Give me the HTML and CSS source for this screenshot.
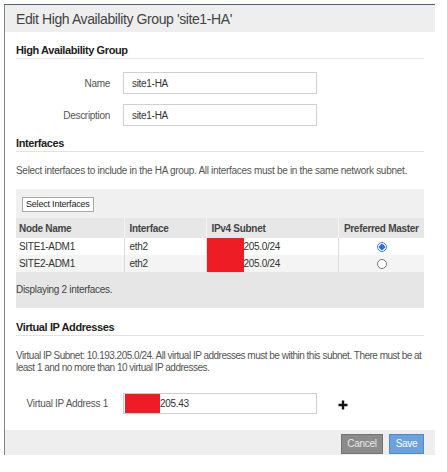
FILE: index.html
```html
<!DOCTYPE html>
<html>
<head>
<meta charset="utf-8">
<link rel="stylesheet" href="styles.css">
</head>
<body>
<div class="dialog">
  <div class="dlg-header">
    <h1 class="dlg-title">Edit High Availability Group 'site1-HA'</h1>
  </div>
  <div class="dlg-body">
    <h2 class="section-title sec-first">High Availability Group</h2>
    <div class="form-row row-name">
      <label class="form-label">Name</label>
      <div class="field"><span class="field-text">site1-HA</span></div>
    </div>
    <div class="form-row row-desc">
      <label class="form-label">Description</label>
      <div class="field"><span class="field-text">site1-HA</span></div>
    </div>

    <h2 class="section-title sec-if">Interfaces</h2>
    <p class="help help-if">Select interfaces to include in the HA group. All interfaces must be in the same network subnet.</p>

    <div class="grid-panel">
      <div class="grid-toolbar">
        <button class="btn-select">Select Interfaces</button>
      </div>
      <table class="grid">
        <colgroup>
          <col class="c1"><col class="c2"><col class="c3"><col class="c4">
        </colgroup>
        <thead>
          <tr>
            <th class="first">Node Name</th>
            <th>Interface</th>
            <th>IPv4 Subnet</th>
            <th class="center">Preferred Master</th>
          </tr>
        </thead>
        <tbody>
          <tr class="odd">
            <td class="first">SITE1-ADM1</td>
            <td>eth2</td>
            <td class="subnet"><span class="redact"></span><span>205.0/24</span></td>
            <td class="center"><span class="radio checked"></span></td>
          </tr>
          <tr class="even">
            <td class="first">SITE2-ADM1</td>
            <td>eth2</td>
            <td class="subnet"><span class="redact"></span><span>205.0/24</span></td>
            <td class="center"><span class="radio"></span></td>
          </tr>
        </tbody>
      </table>
      <div class="grid-footer">Displaying 2 interfaces.</div>
    </div>

    <h2 class="section-title sec-vip">Virtual IP Addresses</h2>
    <p class="help help-vip">Virtual IP Subnet: 10.193.205.0/24. All virtual IP addresses must be within this subnet. There must be at least 1 and no more than 10 virtual IP addresses.</p>

    <div class="form-row row-vip">
      <label class="form-label">Virtual IP Address 1</label>
      <div class="field field-vip"><span class="redact-vip"></span><span class="field-text-vip">205.43</span></div>
      <span class="add-icon">
        <svg width="10" height="10" viewBox="0 0 10 10"><path d="M5 0.5V9.5M0.5 5H9.5" stroke="#111" stroke-width="2.4" fill="none"/></svg>
      </span>
    </div>
  </div>
  <div class="dlg-footer">
    <button class="btn btn-cancel">Cancel</button>
    <button class="btn btn-save">Save</button>
  </div>
</div>
</body>
</html>
```

FILE: styles.css
```css
html, body {
  margin: 0;
  padding: 0;
  background: #ffffff;
}
body {
  font-family: "Liberation Sans", Arial, sans-serif;
  font-size: 10px;
  letter-spacing: -0.3px;
  color: #333333;
}
.dialog {
  margin: 4px 0 0 4px;
  width: 430px;
  border-top: 1px solid #4e6174;
  border-left: 1px solid #858585;
  background: #ffffff;
}
.dlg-header {
  height: 27px;
  background: #eeeeee;
  display: flex;
  align-items: center;
  padding-left: 11px;
}
.dlg-title {
  margin: 0;
  font-size: 14px;
  font-weight: normal;
  letter-spacing: -0.4px;
  color: #444444;
  line-height: 16px;
}
.dlg-body {
  padding: 0 11px;
  display: flex;
  flex-direction: column;
}
.section-title {
  margin: 0;
  font-size: 11px;
  letter-spacing: -0.4px;
  font-weight: bold;
  color: #222222;
  line-height: 14px;
  padding-bottom: 1px;
  border-bottom: 1px solid #e2e2e2;
}
.sec-first { margin-top: 11px; }
.sec-if { margin-top: 10px; }
.sec-vip { margin-top: 12px; }

.form-row {
  display: flex;
  align-items: center;
}
.row-name { margin-top: 13px; }
.row-desc { margin-top: 10px; }
.form-label {
  width: 94px;
  text-align: right;
  color: #555555;
  margin-right: 13px;
}
.field {
  width: 192px;
  height: 20px;
  border: 1px solid #cfcfcf;
  background: #ffffff;
  display: flex;
  align-items: center;
}
.field-text {
  padding-left: 8px;
  color: #333333;
}
.help {
  margin: 0;
  line-height: 12px;
  color: #555555;
}
.help-if { margin-top: 13px; }
.help-vip {
  margin-top: 14px;
  letter-spacing: -0.5px;
}

.grid-panel {
  margin-top: 12px;
  background: #f0f0f0;
}
.grid-toolbar {
  height: 29px;
  display: flex;
  align-items: center;
  padding-left: 6px;
  background: #f0f0f0;
}
.btn-select {
  font-family: "Liberation Sans", Arial, sans-serif;
  font-size: 9px;
  letter-spacing: -0.2px;
  color: #222222;
  background: #ffffff;
  border: 1px solid #a8a8a8;
  height: 15px;
  padding: 0 3px;
  line-height: 13px;
  margin-top: 2px;
}
.grid {
  width: 408px;
  table-layout: fixed;
  border-collapse: collapse;
}
.grid col.c1 { width: 108px; }
.grid col.c2 { width: 82px; }
.grid col.c3 { width: 132px; }
.grid col.c4 { width: 86px; }
.grid th {
  height: 20px;
  padding: 0 5px;
  text-align: left;
  font-weight: bold;
  color: #444444;
  background: #e7e7e7;
  border-left: 1px solid #f4f4f4;
}
.grid td {
  height: 17px;
  padding: 0 5px;
  color: #333333;
  border-left: 1px solid #dddddd;
  white-space: nowrap;
}
.grid .first {
  padding-left: 3px;
  border-left: none;
}
.grid .center { text-align: center; }
.grid tr.odd td { background: #ffffff; }
.grid tr.even td { background: #f4f4f4; }
.grid td.subnet {
  padding: 0;
}
.subnet {
  line-height: 17px;
}
.redact {
  display: inline-block;
  width: 37px;
  height: 17px;
  background: #ee1c25;
  vertical-align: top;
}
.radio {
  display: inline-block;
  width: 8px;
  height: 8px;
  border: 1px solid #7a7a7a;
  border-radius: 50%;
  background: #ffffff;
  vertical-align: middle;
  position: relative;
  left: 1px;
}
.radio.checked {
  border-color: #3a78e0;
  background: radial-gradient(circle, #2f6fe0 0 2.6px, #ffffff 3px);
}
.grid-footer {
  height: 36px;
  line-height: 36px;
  background: #e6e6e6;
  color: #444444;
}
.row-vip { margin-top: 19px; }
.row-vip .form-label {
  width: 92px;
  margin-right: 15px;
}
.field-vip {
  height: 19px;
  align-items: stretch;
  padding-left: 1px;
  width: 191px;
}
.redact-vip {
  width: 35px;
  background: #ee1c25;
}
.field-text-vip {
  display: flex;
  align-items: center;
}
.add-icon {
  display: flex;
  margin-left: 21px;
  margin-top: 2px;
}
.dlg-footer {
  margin-top: 16px;
  height: 25px;
  background: #eeeeee;
  display: flex;
  justify-content: flex-end;
  align-items: flex-start;
  padding: 4px 11px 0 0;
  box-sizing: border-box;
  gap: 6px;
}
.btn {
  font-family: "Liberation Sans", Arial, sans-serif;
  font-size: 10px;
  letter-spacing: -0.3px;
  height: 20px;
  padding: 0;
  line-height: 18px;
}
.btn-cancel {
  width: 42px;
  background: #8b8b8b;
  border: 1px solid #737373;
  color: #e8e8e8;
}
.btn-save {
  width: 35px;
  background: #6ca1dc;
  border: 1px solid #4f89cb;
  color: #ffffff;
}
```
